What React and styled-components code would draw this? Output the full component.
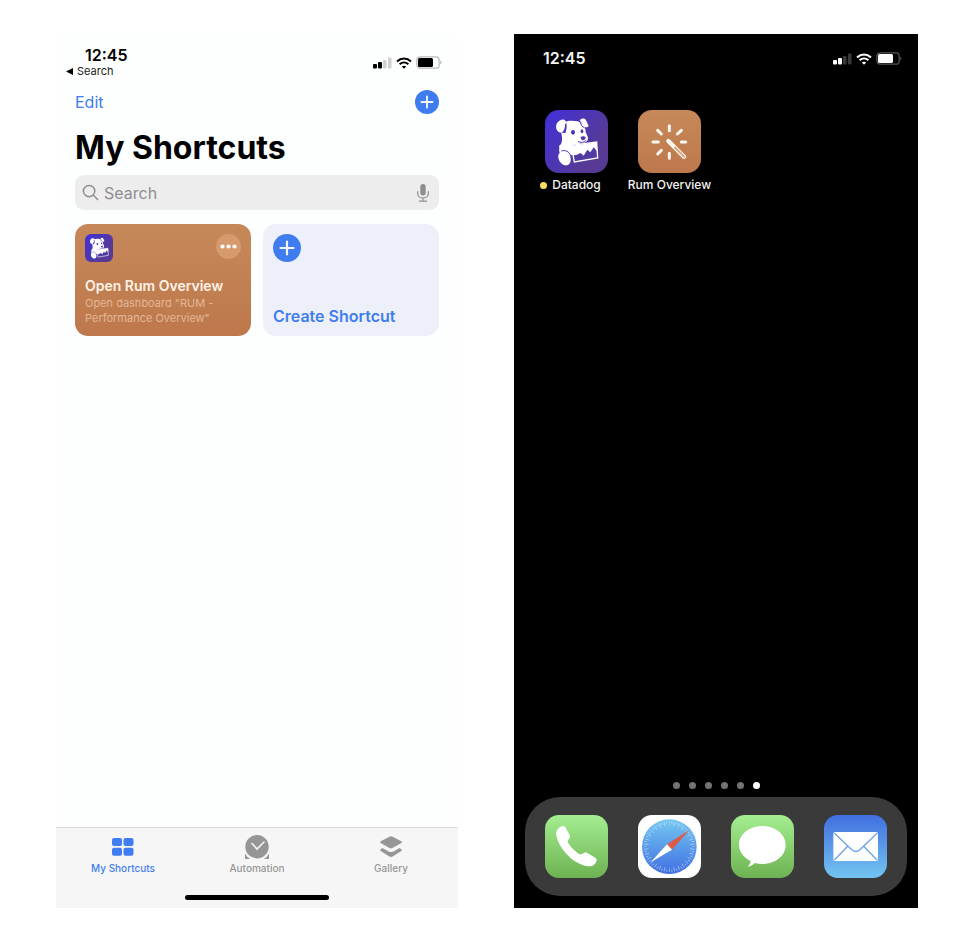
import React from "react";
import styled, { createGlobalStyle } from "styled-components";

const GlobalStyle = createGlobalStyle`
  *, *::before, *::after { box-sizing: border-box; }
  body { margin: 0; background: #fff; font-family: Inter, "Liberation Sans", sans-serif; }
  button, input { font: inherit; color: inherit; }
  button { border: 0; padding: 0; background: none; cursor: pointer; }
  a { color: inherit; text-decoration: none; }
  svg { display: block; flex: none; }
  h1, h2, p { margin: 0; }
`;

const Page = styled.main`
  display: grid;
  grid-template-columns: 402fr 404fr;
  gap: 56px;
  min-height: 100vh;
  padding: 34px 46px 26px 56px;
`;

const Screen = styled.section`
  display: flex;
  flex-direction: column;
  min-width: 0;
  background: ${(p) => (p.$dark ? "#000" : "#fdfefe")};
  color: ${(p) => (p.$dark ? "#f4f4f4" : "#000")};
`;

/* Status bar */

const StatusBar = styled.header`
  display: flex;
  justify-content: space-between;
  align-items: flex-start;
  padding: ${(p) => (p.$dark ? "14px 16px 0 29px" : "11px 16px 0 10px")};
`;

const Clock = styled.time`
  display: block;
  font-size: 16px;
  line-height: 20px;
  font-weight: 600;
  padding-left: ${(p) => (p.$indent ? "19px" : "0")};
`;

const BackLink = styled.a`
  display: flex;
  align-items: center;
  gap: 4px;
  font-size: 11px;
  line-height: 12px;
  color: #222;
`;

const StatusIcons = styled.div`
  display: flex;
  align-items: center;
  gap: 4px;
  padding-top: ${(p) => (p.$dark ? "4px" : "11px")};
`;

function Status({ dark }) {
  const ink = dark ? "#fff" : "#000";
  const faint = dark ? "#3a3a3a" : "#d0d0d0";
  return (
    <StatusIcons $dark={dark}>
      <svg width="19" height="12" viewBox="0 0 19 12" aria-label="Signal" role="img">
        <rect x="0" y="7" width="4" height="4.500" rx="1" fill={ink} />
        <rect x="5" y="5" width="4" height="6.500" rx="1" fill={ink} />
        <rect x="10" y="3" width="3.500" height="8.500" rx="1" fill={faint} />
        <rect x="15" y="0.500" width="3.500" height="11" rx="1" fill={faint} />
      </svg>
      <svg width="16" height="12" viewBox="0 0 16 12" fill="none" stroke={ink} strokeWidth="2" aria-label="Wi-Fi" role="img">
        <path d="M1 4.400C5 .6 11 .6 15 4.400" />
        <path d="M3.600 7.200C6.200 4.900 9.800 4.900 12.400 7.200" />
        <path d="M8 11.800 5.800 9.500C7 8.500 9 8.500 10.200 9.500Z" fill={ink} stroke="none" />
      </svg>
      <svg width="26" height="13" viewBox="0 0 26 13" aria-label="Battery" role="img">
        <rect x="0.800" y="0.800" width="22.400" height="11.400" rx="3.300" fill="none" stroke={dark ? "#555" : "#bbb"} strokeWidth="1.200" />
        <rect x="2" y="2" width="15" height="9" rx="1.500" fill={ink} />
        <path d="M24.300 4.500c1.600.7 1.600 3.300 0 4Z" fill={dark ? "#555" : "#aaa"} />
      </svg>
    </StatusIcons>
  );
}

/* Shortcuts app */

const Content = styled.div`
  flex: 1;
  padding: 13px 19px 0;
`;

const NavRow = styled.nav`
  display: flex;
  justify-content: space-between;
  align-items: center;
  height: 24px;
`;

const EditButton = styled.button`
  font-size: 16px;
  line-height: 24px;
  color: #3f7df0;
`;

const PlusButton = styled.button`
  display: block;
`;

function PlusCircle({ size }) {
  return (
    <svg width={size} height={size} viewBox="0 0 28 28">
      <circle cx="14" cy="14" r="14" fill="#3f7def" />
      <path d="M14 7.500v13M7.500 14h13" stroke="#f4f7ff" strokeWidth="2.200" strokeLinecap="round" />
    </svg>
  );
}

const Title = styled.h1`
  margin-top: 14px;
  font-size: 32px;
  line-height: 40px;
  font-weight: 700;
  white-space: nowrap;
`;

const SearchField = styled.label`
  display: flex;
  align-items: center;
  gap: 5px;
  height: 35px;
  margin-top: 7px;
  padding: 0 10px 0 7px;
  border-radius: 9px;
  background: #ededed;
  color: #8e8e92;
`;

const SearchInput = styled.input.attrs({ type: "search" })`
  flex: 1;
  min-width: 0;
  border: 0;
  padding: 0;
  outline: 0;
  appearance: none;
  background: none;
  font-size: 16px;
  line-height: 24px;
  &::placeholder { color: #8e8e92; opacity: 1; }
`;

const Cards = styled.div`
  display: grid;
  grid-template-columns: 1fr 1fr;
  gap: 12px;
  margin-top: 14px;
`;

const Card = styled.article`
  display: flex;
  flex-direction: column;
  justify-content: space-between;
  min-height: 112px;
  padding: 10px;
  border-radius: 13px;
  background: ${(p) => (p.$create ? "#edf0f9" : "linear-gradient(#c78959, #bd784c)")};
  color: ${(p) => (p.$create ? "#3f7def" : "#fff3e8")};
`;

const CardTop = styled.div`
  display: flex;
  justify-content: space-between;
  align-items: flex-start;
`;

const MoreButton = styled.button`
  display: grid;
  place-items: center;
  width: 25px;
  height: 25px;
  border-radius: 50%;
  background: #d79a6c;
`;

const CardTitle = styled.h2`
  font-size: ${(p) => (p.$large ? "16px" : "14px")};
  line-height: 20px;
  font-weight: 600;
  text-align: left;
  white-space: nowrap;
`;

const CardText = styled.p`
  font-size: 11px;
  line-height: 15px;
  color: #e4b795;
`;

const TabBar = styled.nav`
  display: grid;
  grid-template-columns: repeat(3, 1fr);
  padding-top: 7px;
  border-top: 1px solid #dedede;
  background: #f6f6f6;
`;

const Tab = styled.button`
  display: flex;
  flex-direction: column;
  align-items: center;
  gap: 2px;
  font-size: 10px;
  line-height: 14px;
  font-weight: 500;
  color: ${(p) => (p.$active ? "#3f7df0" : "#969696")};
`;

const HomeArea = styled.div`
  display: flex;
  justify-content: center;
  padding: 20px 0 8px;
  background: #f6f6f6;
`;

const HomeIndicator = styled.div`
  width: 144px;
  height: 5px;
  border-radius: 3px;
  background: #000;
`;

/* Apps */

const IconTile = styled.span`
  display: grid;
  place-items: center;
  width: ${(p) => (p.$small ? "28px" : "63px")};
  height: ${(p) => (p.$small ? "28px" : "63px")};
  border-radius: ${(p) => (p.$small ? "6px" : "14px")};
  background: ${(p) => p.$fill};
  color: #fff;
`;

const DATADOG_FILL = "linear-gradient(125deg, #4230dc, #563a94 75%)";
const GREEN_FILL = "linear-gradient(#a4ee91, #6db252)";

const AppGrid = styled.div`
  display: grid;
  grid-template-columns: repeat(4, 1fr);
  flex: 1;
  align-content: start;
  padding: 42px 16px 0;
`;

const AppButton = styled.button`
  display: flex;
  flex-direction: column;
  align-items: center;
  gap: 4px;
  min-width: 0;
`;

const AppLabel = styled.span`
  position: relative;
  font-size: 12px;
  line-height: 16px;
  font-weight: 500;
  white-space: nowrap;
`;

const NewDot = styled.i`
  position: absolute;
  top: 5px;
  right: calc(100% + 5px);
  width: 7px;
  height: 7px;
  border-radius: 50%;
  background: #f8de62;
`;

const PageDots = styled.div`
  display: flex;
  justify-content: center;
  gap: 9px;
  padding-bottom: 8px;
`;

const PageDot = styled.i`
  width: 7px;
  height: 7px;
  border-radius: 50%;
  background: ${(p) => (p.$current ? "#fff" : "#747474")};
`;

const Dock = styled.nav`
  display: grid;
  grid-template-columns: repeat(4, 1fr);
  margin: 0 11px 12px;
  padding: 18px 5px;
  border-radius: 35px;
  background: #3a3a3a;
`;

/* App icon drawings share a 189-unit square */

function DogIcon({ size }) {
  return (
    <svg width={size} height={size} viewBox="0 0 189 189" fill="#fff">
      <path d="M60 36C70 31 84 31 98 34L108 38C119 45 122 55 122 66L128 80C131 87 127 95 118 98C110 101 102 100 97 103L82 106L81 136C68 136 58 128 44 128C40 120 45 115 42 108C50 103 52 94 51 82L49 66Z" />
      <path d="M50 29C58 27 63 31 63 39C62 50 61 60 56 66C49 72 37 66 34 56C31 43 38 32 50 29Z" />
      <path d="M104 30C110 24 120 23 123 31L131 48C128 53 121 53 116 50L109 38Z" />
      <path d="M48 122C62 118 75 126 77 145C79 161 70 168 59 166C46 162 38 147 40 135Z" />
      <path d="M60 42C61 54 57 63 50 68L61 69C65 60 66 50 64 40Z" fill="#4934c4" />
      <path d="M106 37C108 45 112 51 119 54" fill="none" stroke="#4d37b5" strokeWidth="3" />
      <ellipse cx="84" cy="67" rx="6" ry="7" fill="#4934bd" />
      <ellipse cx="111" cy="64" rx="4" ry="6" fill="#4d37b5" />
      <path d="M106 83C111 78 119 78 122 82C121 89 116 92 111 90Z" fill="#4d37b5" />
      <path d="M99 94C107 99 117 98 123 91" fill="none" stroke="#4d37b5" strokeWidth="3" />
      <path d="M49 123C60 119 73 124 77 138" fill="none" stroke="#4b36b9" strokeWidth="3" />
      <path d="M79 106 155 96 158 144 88 156Z" fill="#523aa3" stroke="#fff" strokeWidth="4" />
      <path d="M80 107 155 97 156 124 146 112 136 127 127 119 116 137 107 129 94 135 82 136Z" />
    </svg>
  );
}

function WandIcon() {
  return (
    <svg width="63" height="63" viewBox="0 0 189 189" stroke="#fff8f0" strokeWidth="9" strokeLinecap="round" fill="none">
      <path d="M94 47v15M94 130v15M45 96h16M130 96h13M59 61l11 11M130 61l-12 11M59 132l11-11" />
      <path d="M91 93 138 140" strokeWidth="13" />
      <path d="M111 113 138 140" stroke="#c17f53" strokeWidth="6" />
      <path d="M111 113 138 140" strokeWidth="2" />
    </svg>
  );
}

function PhoneIcon() {
  return (
    <svg width="63" height="63" viewBox="0 0 189 189" fill="#fff">
      <path d="M51 34C55 32 58 33 61 37L74 60C76 64 75 67 72 71C68 76 67 80 70 85C78 98 89 108 101 116C106 119 110 118 115 115C119 112 123 112 127 114L151 128C155 131 156 134 154 139C150 150 142 155 132 154C112 152 92 142 76 128C55 109 39 87 34 61C32 47 39 38 51 34Z" />
    </svg>
  );
}

function SafariIcon() {
  return (
    <svg width="63" height="63" viewBox="0 0 189 189">
      <defs>
        <linearGradient id="compass" x1="0" y1="0" x2="0" y2="1">
          <stop offset="0" stopColor="#74c8f2" />
          <stop offset="1" stopColor="#416fe1" />
        </linearGradient>
      </defs>
      <circle cx="94" cy="95" r="82" fill="url(#compass)" />
      {Array.from({ length: 60 }, (_, i) => (
        <path
          key={i}
          d={i % 2 ? "M94 19v7" : "M94 19v13"}
          stroke="#d8edff"
          strokeWidth="2"
          opacity="0.750"
          transform={`rotate(${i * 6} 94 95)`}
        />
      ))}
      <path d="M154 45 102 104 87 88Z" fill="#dc5b48" />
      <path d="M38 142 87 88 102 104Z" fill="#fff" />
    </svg>
  );
}

function MessagesIcon() {
  return (
    <svg width="63" height="63" viewBox="0 0 189 189" fill="#fff">
      <path d="M94 33c39 0 70 25 70 57s-31 57-70 57c-8 0-15-1-22-3-6 6-14 10-22 12 5-6 8-11 9-18C38 128 24 110 24 90c0-32 31-57 70-57Z" />
    </svg>
  );
}

function MailIcon() {
  return (
    <svg width="63" height="63" viewBox="0 0 189 189" fill="none" stroke="#6ca4ea" strokeWidth="4">
      <rect x="28" y="51" width="134" height="87" rx="5" fill="#fff" stroke="none" />
      <path d="M31 54 81 102c9 9 20 9 29 0L160 54M31 135 71 94M159 135 119 94" />
    </svg>
  );
}

const DOCK_APPS = [
  { name: "Phone", fill: GREEN_FILL, icon: <PhoneIcon /> },
  { name: "Safari", fill: "#fff", icon: <SafariIcon /> },
  { name: "Messages", fill: GREEN_FILL, icon: <MessagesIcon /> },
  { name: "Mail", fill: "linear-gradient(#416fdf, #73c4f1)", icon: <MailIcon /> },
];

function ShortcutsScreen() {
  return (
    <Screen>
      <StatusBar>
        <div>
          <Clock $indent>12:45</Clock>
          <BackLink href="#search">
            <svg width="7" height="7" viewBox="0 0 7 7"><path d="M0 3.500 7 0v7Z" fill="#000" /></svg>
            Search
          </BackLink>
        </div>
        <Status />
      </StatusBar>
      <Content>
        <NavRow>
          <EditButton>Edit</EditButton>
          <PlusButton aria-label="Add"><PlusCircle size={24} /></PlusButton>
        </NavRow>
        <Title>My Shortcuts</Title>
        <SearchField>
          <svg width="17" height="17" viewBox="0 0 18 18" fill="none" stroke="currentColor" strokeWidth="1.600" strokeLinecap="round">
            <circle cx="7.500" cy="7.500" r="6" />
            <path d="m12 12 4.500 4.500" />
          </svg>
          <SearchInput placeholder="Search" aria-label="Search" />
          <svg width="12" height="18" viewBox="0 0 12 18" fill="none" stroke="currentColor" strokeWidth="1.200" strokeLinecap="round">
            <rect x="3.300" y="0" width="5.400" height="11.500" rx="2.700" fill="currentColor" stroke="none" />
            <path d="M.7 7.500v2c0 6 10.600 6 10.600 0v-2M6 14v3M2.500 17.200h7" />
          </svg>
        </SearchField>
        <Cards>
          <Card>
            <CardTop>
              <IconTile $small $fill={DATADOG_FILL}><DogIcon size={28} /></IconTile>
              <MoreButton aria-label="More">
                <svg width="17" height="5" viewBox="0 0 17 5" fill="#fff">
                  <circle cx="2.500" cy="2.500" r="2.100" /><circle cx="8.500" cy="2.500" r="2.100" /><circle cx="14.500" cy="2.500" r="2.100" />
                </svg>
              </MoreButton>
            </CardTop>
            <div>
              <CardTitle>Open Rum Overview</CardTitle>
              <CardText>Open dashboard "RUM - Performance Overview"</CardText>
            </div>
          </Card>
          <Card $create>
            <PlusCircle size={28} />
            <CardTitle as="button" $large>Create Shortcut</CardTitle>
          </Card>
        </Cards>
      </Content>
      <TabBar>
        <Tab $active>
          <svg width="24" height="24" viewBox="0 0 24 24" fill="currentColor">
            <rect x="1" y="3" width="10" height="8" rx="2" /><rect x="12.500" y="3" width="10" height="8" rx="2" />
            <rect x="1" y="12.800" width="10" height="8" rx="2" /><rect x="12.500" y="12.800" width="10" height="8" rx="2" />
          </svg>
          My Shortcuts
        </Tab>
        <Tab>
          <svg width="24" height="24" viewBox="0 0 24 24" fill="currentColor">
            <path d="M0 24v-5.500Q1.500 22 5 23.500L4 24ZM24 24v-5.500Q22.500 22 19 23.500l1 .5Z" />
            <circle cx="12" cy="11.700" r="11.700" />
            <path d="m7 8.500 5 5.500 7-7" fill="none" stroke="#f6f6f6" strokeWidth="1.600" strokeLinecap="round" />
          </svg>
          Automation
        </Tab>
        <Tab>
          <svg width="24" height="24" viewBox="0 0 24 24" fill="currentColor">
            <path d="M10.500 1.700q1.500-.8 3 0l8.800 4.600q1.400.9 0 1.800l-8.300 4.700q-2 1-4 0L1.700 8.100q-1.400-.9 0-1.800Z" />
            <path d="m3.500 13.100 6 3.300q2.500 1.200 5 0l6-3.300 1.800 1.100q1.400.9 0 1.800l-8.300 5.300q-2 1.200-4 0L1.700 16q-1.400-.9 0-1.800Z" />
          </svg>
          Gallery
        </Tab>
      </TabBar>
      <HomeArea><HomeIndicator /></HomeArea>
    </Screen>
  );
}

function HomeScreen() {
  return (
    <Screen $dark>
      <StatusBar $dark>
        <Clock>12:45</Clock>
        <Status dark />
      </StatusBar>
      <AppGrid>
        <AppButton>
          <IconTile $fill={DATADOG_FILL}><DogIcon size={63} /></IconTile>
          <AppLabel><NewDot />Datadog</AppLabel>
        </AppButton>
        <AppButton>
          <IconTile $fill="linear-gradient(#c78959, #bd784c)"><WandIcon /></IconTile>
          <AppLabel>Rum Overview</AppLabel>
        </AppButton>
      </AppGrid>
      <PageDots>
        {[0, 1, 2, 3, 4, 5].map((n) => <PageDot key={n} $current={n === 5} />)}
      </PageDots>
      <Dock>
        {DOCK_APPS.map((app) => (
          <AppButton key={app.name} aria-label={app.name}>
            <IconTile $fill={app.fill}>{app.icon}</IconTile>
          </AppButton>
        ))}
      </Dock>
    </Screen>
  );
}

export default function App() {
  return (
    <>
      <GlobalStyle />
      <Page>
        <ShortcutsScreen />
        <HomeScreen />
      </Page>
    </>
  );
}
